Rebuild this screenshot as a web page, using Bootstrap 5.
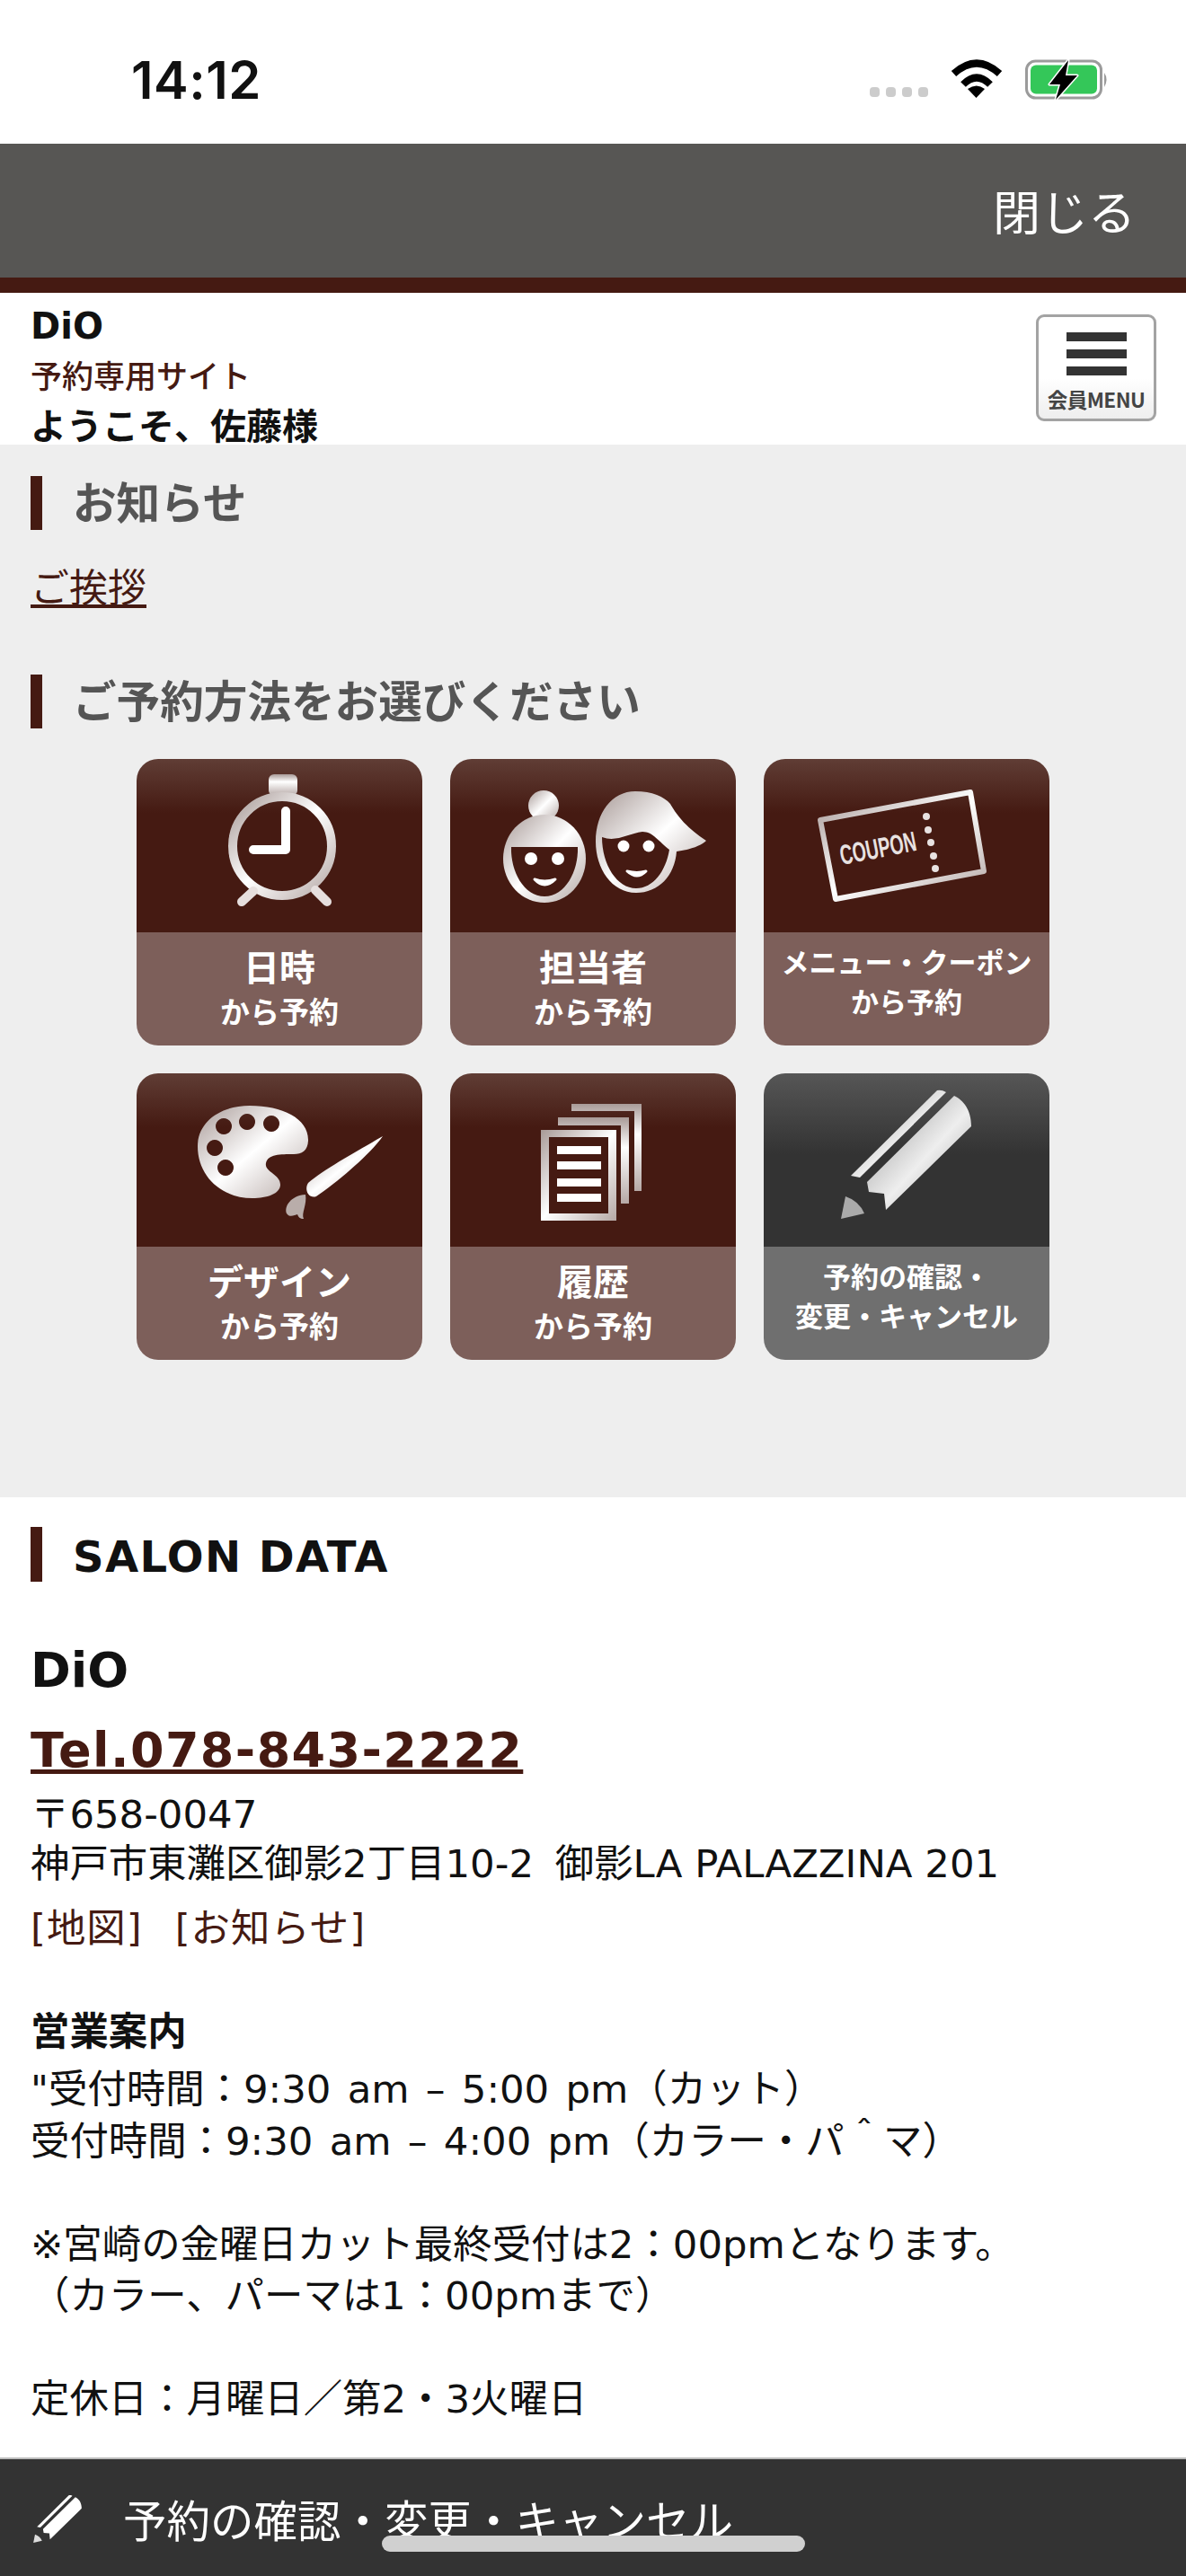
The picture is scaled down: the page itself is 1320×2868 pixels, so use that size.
<!DOCTYPE html>
<html lang="ja">
<head>
<meta charset="utf-8">
<title>DiO</title>
<link rel="stylesheet" href="https://cdn.jsdelivr.net/npm/bootstrap@5.3.0/dist/css/bootstrap.min.css">
<style>
:root{--brown:#451a12;}
html,body{height:100%;}
body{font-family:"DejaVu Sans","Noto Sans CJK JP",sans-serif;background:#fff;color:#111;width:1320px;height:2868px;overflow:hidden;font-size:43.4px;}
.shell{height:2868px;}
.statusbar{height:160px;background:#fff;padding-left:146px;padding-right:85px;}
.clock{font-family:Inter,sans-serif;font-weight:600;font-size:58px;letter-spacing:.5px;color:#111;line-height:1;margin-top:60px;}
.sig-dots{gap:7px;margin-top:31px;}
.sig-dot{width:11px;height:11px;border-radius:4px;background:#ccc;}
.status-right{gap:25px;padding-top:66px;align-items:flex-start;}
.closebar{height:149px;background:#575654;color:#fff;font-size:53px;padding-right:56px;font-family:"Noto Sans CJK JP",sans-serif;}
.brownline{height:17px;background:var(--brown);}
.sitehead{height:169px;padding:14px 33px 0 34px;}
.site-name{font-size:40px;font-weight:700;line-height:46px;color:#111;}
.site-sub{font-size:35px;font-weight:500;line-height:48px;color:var(--brown);margin-top:7px;font-family:"Noto Sans CJK JP",sans-serif;}
.site-hello{font-size:40px;font-weight:700;line-height:50px;color:#111;margin-top:6px;font-family:"Noto Sans CJK JP",sans-serif;}
.memberbtn{width:134px;height:119px;margin-top:10px;border:3px solid #a3a3a3;border-radius:9px;background:linear-gradient(#fff 60%,#eee);padding:17px 0 0;}
.memberbar{width:67px;height:10px;background:#333;margin-bottom:9px;flex:none;}
.memberlabel{font-size:22.5px;font-weight:700;color:#444;line-height:26px;margin-top:4px;font-family:"Noto Sans CJK JP",sans-serif;letter-spacing:-.5px;}
.notice-area{height:1172px;background:#eee;padding:35px 34px 0;}
.sec-title{border-left:13px solid var(--brown);padding-left:34px;height:60px;line-height:54px;font-size:48.6px;font-weight:700;color:#555;font-family:"Noto Sans CJK JP",sans-serif;}
.notice-link{color:var(--brown);font-size:43px;line-height:60px;margin-top:31px;margin-bottom:0;display:block;font-family:"Noto Sans CJK JP",sans-serif;}
.title-two{margin-top:70px;}
.tile-wrap{width:1016px;gap:31px;margin:34px 0 0 118px;}
.tile{width:318px;height:319px;border-radius:24px;overflow:hidden;color:#fff;text-decoration:none;font-family:"Noto Sans CJK JP",sans-serif;}
.tile-top{height:193px;background:linear-gradient(#603d35 0,#451a12 60px);}
.tile-top svg{display:block;width:318px;height:193px;}
.tile-bottom{height:126px;background:#7d5f5a;text-align:center;font-weight:500;}
.tile-big{font-size:40px;font-weight:700;line-height:50px;padding-top:12px;}
.tile-small{font-size:33px;line-height:46px;font-weight:700;margin-top:2px;}
.tile-two{font-size:31px;font-weight:700;line-height:44px;padding-top:10px;}
.tile-grey .tile-top{background:linear-gradient(#565656 0,#333 90px);}
.tile-grey .tile-bottom{background:#6f6f6f;}
.salon{height:1069px;padding:33px 34px 0;background:#fff;}
.salon-title{border-left:13px solid var(--brown);padding-left:34px;height:61px;line-height:66px;font-size:48px;font-weight:700;color:#111;letter-spacing:1.4px;}
.salon-name{font-size:54px;font-weight:700;line-height:70px;margin-top:64px;color:#111;}
.salon-tel{font-size:54px;font-weight:700;line-height:70px;margin-top:19px;display:block;color:var(--brown);letter-spacing:1.4px;}
.salon-addr{line-height:55px;margin-top:9px;}
.salon-links{line-height:60px;margin-top:14px;letter-spacing:1px;}
.salon-links a{color:var(--brown);text-decoration:none;margin-right:36px;}
.salon-h{font-weight:700;line-height:58px;margin-top:52px;font-family:"Noto Sans CJK JP",sans-serif;letter-spacing:0;}
.salon-body{line-height:57.5px;margin-top:11px;}
.wide-space{word-spacing:4.5px;}
.addr-space{word-spacing:10px;}
.cancelbar{height:132px;background:#333;color:#fff;font-size:48.5px;padding-left:37px;gap:46px;padding-top:2px;font-family:"Noto Sans CJK JP",sans-serif;border-top:2px solid #bbb;}
.homebar{position:absolute;left:425px;top:2823px;width:471px;height:18px;border-radius:9px;background:#d0d0d0;}
</style>
</head>
<body>
<svg width="0" height="0" class="position-absolute">
<defs>
<linearGradient id="m" x1="0" y1="0" x2="1" y2="1"><stop offset="0" stop-color="#a89a97"/><stop offset=".5" stop-color="#fff"/><stop offset="1" stop-color="#b5a8a5"/></linearGradient>
<linearGradient id="mv" x1="0" y1="0" x2="0" y2="1"><stop offset="0" stop-color="#a89a97"/><stop offset=".35" stop-color="#fff"/><stop offset="1" stop-color="#b5a8a5"/></linearGradient>
<linearGradient id="g" x1="0" y1="0" x2="1" y2="1"><stop offset="0" stop-color="#8f8f8f"/><stop offset=".55" stop-color="#eee"/><stop offset="1" stop-color="#999"/></linearGradient>
</defs>
</svg>
<div class="shell d-flex flex-column position-relative">
  <div class="statusbar d-flex justify-content-between">
    <div class="clock">14:12</div>
    <div class="d-flex status-right">
      <div class="d-flex sig-dots"><span class="sig-dot"></span><span class="sig-dot"></span><span class="sig-dot"></span><span class="sig-dot"></span></div>
      <svg width="58" height="43" viewBox="0 0 58 43"><path d="M3.5 16Q29-7 54.5 16" fill="none" stroke="#000" stroke-width="8"/><path d="M14 28Q29 13 44 28" fill="none" stroke="#000" stroke-width="8"/><path d="M19 33Q29 26 38 33L28.500 43Z" fill="#000"/></svg>
      <svg width="94" height="46" viewBox="0 0 94 46"><rect x="1.500" y="2" width="83" height="41" rx="10" fill="none" stroke="#9b9b9b" stroke-width="3"/><rect x="6" y="6.500" width="74" height="32" rx="6" fill="#34c759"/><path d="M88 15Q93 22 88 31Z" fill="#9b9b9b"/><path d="M48 1L27 28H39L34 45L58 18H45Z" fill="#000" stroke="#fff" stroke-width="3" stroke-linejoin="round" paint-order="stroke"/></svg>
    </div>
  </div>
  <div class="closebar d-flex align-items-center justify-content-end">閉じる</div>
  <div class="brownline"></div>
  <header class="sitehead d-flex justify-content-between align-items-start">
    <div>
      <div class="site-name">DiO</div>
      <div class="site-sub">予約専用サイト</div>
      <div class="site-hello">ようこそ、佐藤様</div>
    </div>
    <button class="memberbtn d-flex flex-column align-items-center" type="button">
      <span class="memberbar"></span><span class="memberbar"></span><span class="memberbar"></span>
      <span class="memberlabel">会員MENU</span>
    </button>
  </header>
  <section class="notice-area">
    <div class="sec-title">お知らせ</div>
    <a class="notice-link" href="#">ご挨拶</a>
    <div class="sec-title title-two">ご予約方法をお選びください</div>
    <div class="tile-wrap d-flex flex-wrap">
      <a class="tile d-block" href="#">
        <div class="tile-top"><svg viewBox="0 0 318 193">
          <rect x="147" y="17" width="32" height="24" rx="6" fill="url(#mv)"/>
          <circle cx="162" cy="97" r="55" fill="none" stroke="url(#m)" stroke-width="10"/>
          <path d="M166 58V101H130" fill="none" stroke="#fff" stroke-width="10" stroke-linecap="round" stroke-linejoin="round"/>
          <path d="M117 159L130 147M212 159L199 146" stroke="#e6dfde" stroke-width="10" stroke-linecap="round"/>
        </svg></div>
        <div class="tile-bottom"><div class="tile-big">日時</div><div class="tile-small">から予約</div></div>
      </a>
      <a class="tile d-block" href="#">
        <div class="tile-top"><svg viewBox="0 0 318 193">
          <circle cx="104" cy="52" r="17" fill="url(#m)"/>
          <ellipse cx="105" cy="111" rx="46" ry="49" fill="url(#m)"/>
          <path d="M68 98H142C143 125 128 153 105 153C82 153 67 125 68 98Z" fill="#451a12"/>
          <circle cx="90" cy="111" r="7" fill="#fff"/><circle cx="120" cy="111" r="7" fill="#fff"/>
          <path d="M94 134Q105 146 117 134Q105 138 94 134Z" fill="#fff" stroke="#fff" stroke-width="3" stroke-linejoin="round"/>
          <path d="M162 92C162 60 180 36 206 36C225 36 238 42 245 50C252 62 262 76 285 91C280 96 268 101 252 103C250 130 232 149 207 149C180 149 162 122 162 92Z" fill="url(#m)"/>
          <path d="M169 87C185 93 198 83 214 81C226 81 232 92 244 101C240 125 226 144 207 144C186 144 169 118 169 87Z" fill="#451a12"/>
          <circle cx="193" cy="97" r="6.500" fill="#fff"/><circle cx="221" cy="97" r="6.500" fill="#fff"/>
          <path d="M197 125Q208 135 218 125Q208 128 197 125Z" fill="#fff" stroke="#fff" stroke-width="3" stroke-linejoin="round"/>
        </svg></div>
        <div class="tile-bottom"><div class="tile-big">担当者</div><div class="tile-small">から予約</div></div>
      </a>
      <a class="tile d-block" href="#">
        <div class="tile-top"><svg viewBox="0 0 318 193">
          <path d="M63 68L230 37L245 125L80 156Z" fill="none" stroke="url(#m)" stroke-width="6" stroke-linejoin="round"/>
          <g fill="#e8e2e1"><circle cx="181" cy="64" r="4"/><circle cx="183" cy="79" r="4"/><circle cx="186" cy="93" r="4"/><circle cx="189" cy="108" r="4"/><circle cx="191" cy="122" r="4"/></g>
          <text x="127" y="110" text-anchor="middle" transform="rotate(-11 127 99)" font-family="'Liberation Sans',sans-serif" font-weight="700" font-size="31" fill="#e8e2e1" textLength="86" lengthAdjust="spacingAndGlyphs">COUPON</text>
        </svg></div>
        <div class="tile-bottom"><div class="tile-two">メニュー・クーポン<br>から予約</div></div>
      </a>
      <a class="tile d-block" href="#">
        <div class="tile-top"><svg viewBox="0 0 318 193">
          <path fill-rule="evenodd" fill="url(#m)" d="M68 81C68 55 92 36 126 36C162 36 191 50 191 74C191 86 184 90 175 90C160 90 146 90 144 100C142 110 160 112 160 124C160 134 145 139 129 139C95 139 68 115 68 81ZM97 50a9 9 0 1 0 .01 0ZM123 45a9 9 0 1 0 .01 0ZM150 47a9 9 0 1 0 .01 0ZM87 74a9 9 0 1 0 .01 0ZM99 96a9 9 0 1 0 .01 0Z"/>
          <path d="M274 70C250 84 210 106 191 122C186 130 192 140 200 137C225 120 260 90 274 70Z" fill="url(#m)"/>
          <path d="M188 135C172 136 164 148 167 156C170 161 176 158 179 157C180 160 182 162 186 162C183 156 190 146 188 135Z" fill="#b9adaa"/>
        </svg></div>
        <div class="tile-bottom"><div class="tile-big">デザイン</div><div class="tile-small">から予約</div></div>
      </a>
      <a class="tile d-block" href="#">
        <div class="tile-top"><svg viewBox="0 0 318 193">
          <path d="M135 34H213V131H205V42H135Z" fill="url(#mv)"/>
          <path d="M120 49H199V145H190V58H120Z" fill="url(#mv)"/>
          <path fill-rule="evenodd" d="M101 63H185V164H101ZM110 71V156H176V71Z" fill="url(#m)"/>
          <g fill="#fff"><rect x="119" y="81" width="49" height="9"/><rect x="119" y="98" width="49" height="9"/><rect x="119" y="117" width="49" height="9"/><rect x="119" y="134" width="49" height="9"/></g>
        </svg></div>
        <div class="tile-bottom"><div class="tile-big">履歴</div><div class="tile-small">から予約</div></div>
      </a>
      <a class="tile tile-grey d-block" href="#">
        <div class="tile-top"><svg viewBox="0 0 318 193">
          <path d="M193 19Q198 18 203 21L107 116L97 114Z" fill="url(#g)"/>
          <path d="M212 25C222 30 231 40 231 59L136 152L134 134L117 132L115 121Z" fill="url(#g)"/>
          <path d="M91 137Q106 142 112 156L86 162Z" fill="#aaa"/>
        </svg></div>
        <div class="tile-bottom"><div class="tile-two">予約の確認・<br>変更・キャンセル</div></div>
      </a>
    </div>
  </section>
  <section class="salon">
    <div class="salon-title">SALON DATA</div>
    <div class="salon-name">DiO</div>
    <a class="salon-tel" href="#">Tel.078-843-2222</a>
    <div class="salon-addr">〒658-0047<br>神戸市東灘区御影2丁目<span class="addr-space">10-2 </span>御影LA PALAZZINA 201</div>
    <div class="salon-links"><a href="#">[地図]</a><a href="#">[お知らせ]</a></div>
    <div class="salon-h">営業案内</div>
    <div class="salon-body">"受付時間：<span class="wide-space">9:30 am – 5:00 pm</span>（カット）<br>受付時間：<span class="wide-space">9:30 am – 4:00 pm</span>（カラー・パ＾マ）<br><br>※宮崎の金曜日カット最終受付は2：00pmとなります。<br>（カラー、パーマは1：00pmまで）<br><br>定休日：月曜日／第2・3火曜日</div>
  </section>
  <div class="cancelbar d-flex align-items-center">
    <svg width="54" height="53" viewBox="86 19 145 143"><path d="M193 19Q198 18 203 21L107 116L97 114Z" fill="#fff"/><path d="M212 25C222 30 231 40 231 59L136 152L134 134L117 132L115 121Z" fill="#fff"/><path d="M91 137Q106 142 112 156L86 162Z" fill="#ddd"/></svg>
    <span>予約の確認・変更・キャンセル</span>
  </div>
  <div class="homebar"></div>
</div>
<script src="https://cdn.jsdelivr.net/npm/bootstrap@5.3.0/dist/js/bootstrap.bundle.min.js"></script>
</body>
</html>
